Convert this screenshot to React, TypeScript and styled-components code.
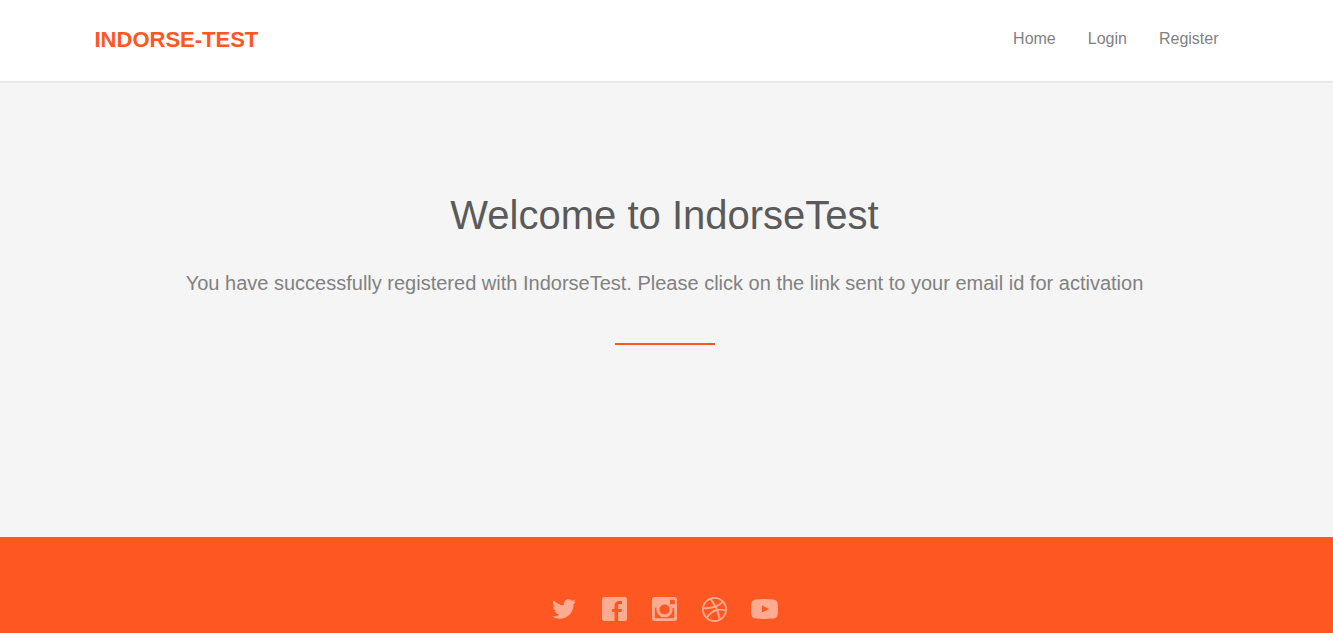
import React from "react";
import styled, { createGlobalStyle } from "styled-components";
import { FaTwitter } from "react-icons/fa";
import { ImDribbble } from "react-icons/im";

const accent = "#ff5722";

const GlobalStyle = createGlobalStyle`
  *, *::before, *::after { box-sizing: border-box; }
  body {
    margin: 0;
    background: #f5f5f5;
    color: #818181;
    font-family: Arial, "Liberation Sans", sans-serif;
    font-size: 16px;
    line-height: 24px;
  }
`;

const Page = styled.div`
  display: flex;
  flex-direction: column;
  height: 100vh;
  overflow: hidden;
`;

const Header = styled.header`
  flex: none;
  padding: 24px 4px 26px 0;
  background: #fff;
  box-shadow: 0 2px 0 rgba(0, 0, 0, 0.05);
`;

const HeaderInner = styled.div`
  display: flex;
  align-items: flex-start;
  justify-content: space-between;
  max-width: 1170px;
  margin: 0 auto;
  padding: 0 15px;
`;

const Brand = styled.a`
  color: ${accent};
  font-size: 22px;
  font-weight: 700;
  line-height: 31px;
  text-decoration: none;
  text-transform: uppercase;
`;

const Nav = styled.nav`
  display: flex;
  line-height: 30px;
`;

const NavLink = styled.a`
  padding: 0 16px;
  color: #818181;
  text-decoration: none;
`;

const Main = styled.main`
  flex: none;
  padding: 104px 4px 192px 0;
  text-align: center;
`;

const Title = styled.h1`
  margin: 0 0 24px;
  color: #5a5a5a;
  font-size: 40px;
  font-weight: 400;
  line-height: 60px;
`;

const Message = styled.p`
  margin: 0;
  font-size: 20px;
  line-height: 28px;
`;

const Rule = styled.hr`
  width: 100px;
  height: 2px;
  margin: 46px auto 0;
  border: 0;
  background: ${accent};
`;

const Footer = styled.footer`
  display: flex;
  flex: 1 0 auto;
  justify-content: center;
  padding: 60px 5px 0 0;
  background: ${accent};
`;

const SocialList = styled.ul`
  display: flex;
  gap: 22px;
  margin: 0;
  padding: 0;
  list-style: none;
`;

const SocialLink = styled.a`
  display: flex;
  align-items: center;
  justify-content: center;
  width: 28px;
  height: 24px;
  color: rgba(255, 255, 255, 0.5);

  svg { flex: none; }
`;

const FacebookIcon = () => (
  <svg width="25" height="24" viewBox="0 0 24 24" preserveAspectRatio="none" fill="currentColor" fillRule="evenodd" aria-hidden="true">
    <path d="M2.300 0h19.400A2.300 2.300 0 0 1 24 2.300v19.400a2.300 2.300 0 0 1-2.300 2.300H15.500V15h3.200l.4-3H15.500V9c0-1.400.5-2 2-2h1.700V4h-2.400C13.700 4 12 5.800 12 8.800V12H9.500v3H12v9H2.300A2.300 2.300 0 0 1 0 21.700V2.300A2.300 2.300 0 0 1 2.300 0z" />
  </svg>
);

const InstagramIcon = () => (
  <svg width="25" height="24" viewBox="0 0 24 24" preserveAspectRatio="none" fill="currentColor" fillRule="evenodd" aria-hidden="true">
    <path d="M2.500 0h19A2.500 2.500 0 0 1 24 2.500v19a2.500 2.500 0 0 1-2.500 2.500h-19A2.500 2.500 0 0 1 0 21.500v-19A2.500 2.500 0 0 1 2.500 0zM18.200 2.700a.9.9 0 0 0-.9.9v2.800c0 .5.4.9.9.9H21c.5 0 .9-.4.9-.9V3.600a.9.9 0 0 0-.9-.9zM2.700 10.800v9.600c0 .5.400.900.900.900h16.800c.500 0 .900-.400.900-.900V10.800h-1.700a7.800 7.800 0 1 1-15.200 0zM12 7.500a5 5 0 1 0 0 10 5 5 0 0 0 0-10z" />
  </svg>
);

const YoutubeIcon = () => (
  <svg width="27" height="22" viewBox="0 0 27 22" fill="currentColor" fillRule="evenodd" aria-hidden="true">
    <path d="M5 1.400Q13.500.600 22 1.400Q26.500 1.800 26.700 6Q27 11 26.700 16Q26.500 20.200 22 20.600Q13.500 21.400 5 20.600Q.5 20.200.3 16Q0 11 .3 6Q.5 1.800 5 1.400ZM11 7.500V14.500L18 11Z" />
  </svg>
);

const navItems = ["Home", "Login", "Register"];

const socialItems = [
  { name: "Twitter", icon: <FaTwitter size={24} /> },
  { name: "Facebook", icon: <FacebookIcon /> },
  { name: "Instagram", icon: <InstagramIcon /> },
  { name: "Dribbble", icon: <ImDribbble size={25} /> },
  { name: "YouTube", icon: <YoutubeIcon /> },
];

export default function App() {
  return (
    <Page>
      <GlobalStyle />
      <Header>
        <HeaderInner>
          <Brand href="#">Indorse-Test</Brand>
          <Nav>
            {navItems.map((item) => (
              <NavLink key={item} href="#">{item}</NavLink>
            ))}
          </Nav>
        </HeaderInner>
      </Header>
      <Main>
        <Title>Welcome to IndorseTest</Title>
        <Message>
          You have successfully registered with IndorseTest. Please click on the link sent to your email id for activation
        </Message>
        <Rule />
      </Main>
      <Footer>
        <SocialList>
          {socialItems.map(({ name, icon }) => (
            <li key={name}>
              <SocialLink href="#" aria-label={name}>{icon}</SocialLink>
            </li>
          ))}
        </SocialList>
      </Footer>
    </Page>
  );
}
